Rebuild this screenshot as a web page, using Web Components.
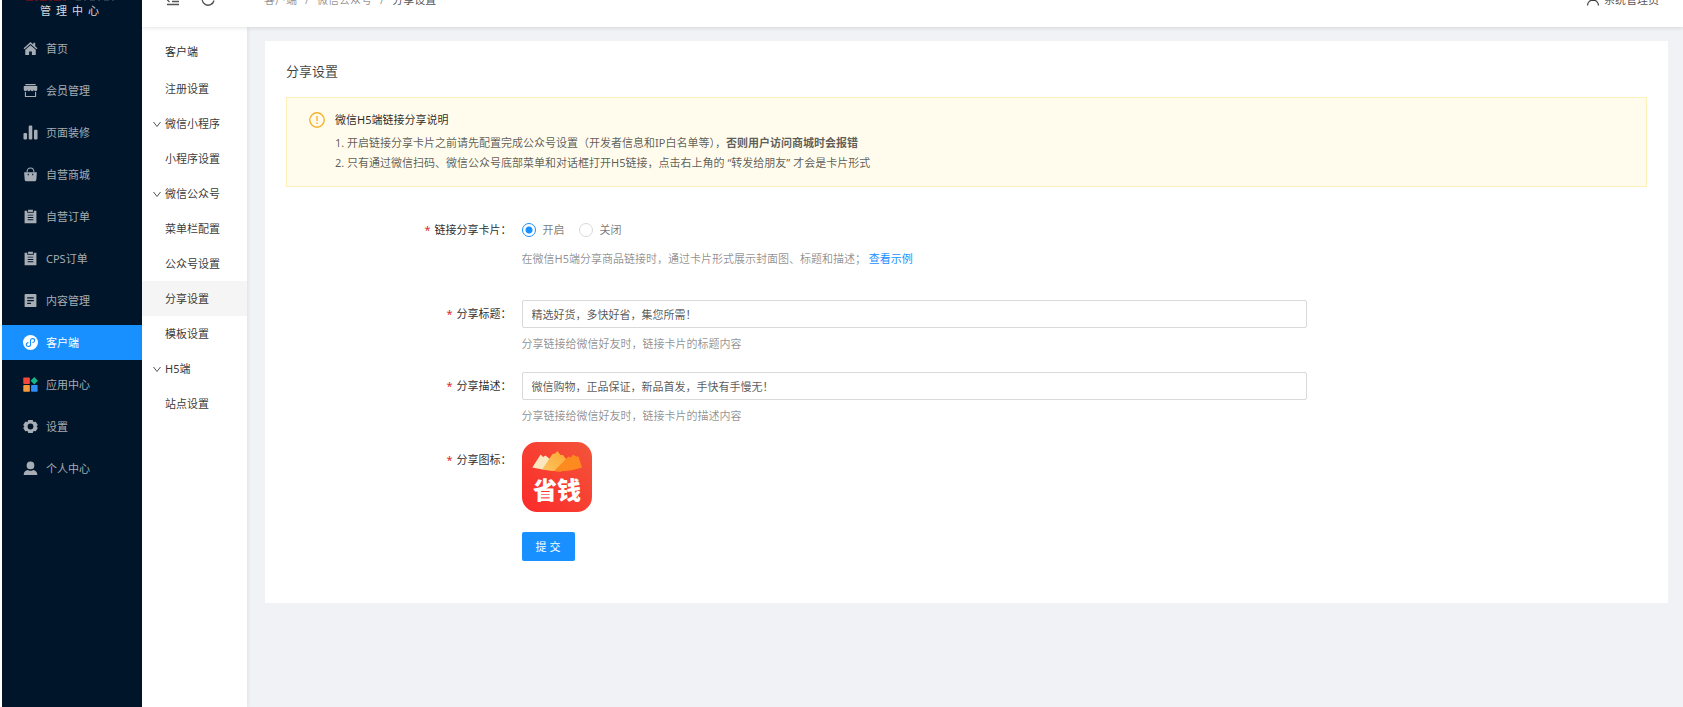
<!DOCTYPE html>
<html lang="zh-CN">
<head>
<meta charset="utf-8">
<title>分享设置</title>
<style>
html{height:100%}
body{margin:0;height:100%;font:11px/20px "Noto Sans","Noto Sans CJK SC",sans-serif;color:rgba(0,0,0,.85);background:#f0f2f5;overflow:hidden}
</style>
</head>
<body>
<admin-app></admin-app>
<script>
const define = (name, html, setup) => {
  const tpl = document.createElement('template');
  tpl.innerHTML = html;
  customElements.define(name, class extends HTMLElement {
    constructor() {
      super();
      this.attachShadow({ mode: 'open' }).append(tpl.content.cloneNode(true));
    }
    connectedCallback() { if (setup) setup(this.shadowRoot, this); }
  });
};

/* Icons of the main menu, on a 16 x 16 grid */
const icons = {
  home: '<path d="M8 1 .6 7.800l1 1.100L8 3.200l6.400 5.700 1-1.100-2.400-2.200V1.800h-2v2z"/><path d="M8 4.600 2.400 9.400v5.600h4.100v-3.800h3V15h4.100V9.400z"/>',
  shop: '<path d="M2.500 1h11v1.400h-11zM.8 3.200h14.400V7a1.800 1.800 0 0 1-3.600 0A1.800 1.800 0 0 1 8 7a1.800 1.800 0 0 1-3.600 0A1.800 1.800 0 0 1 .8 7z"/><path d="M2 9.600h1.200v4.200h9.600V9.600H14V15H2z"/>',
  bars: '<rect x=".5" y="8.500" width="3.800" height="7" rx="1.200"/><rect x="6.100" y=".5" width="3.800" height="15" rx="1.200"/><rect x="11.700" y="5" width="3.800" height="10.500" rx="1.200"/>',
  bag: '<path d="M4.300 5.500C4.300 2.500 5.800 1 8 1s3.700 1.500 3.700 4.500" fill="none" stroke="currentColor" stroke-width="1.100"/><path fill-rule="evenodd" d="M1.200 5.500h13.600l-.6 8a2 2 0 0 1-2 1.800H3.800a2 2 0 0 1-2-1.800zM5 7.300v1.500h1.200V7.300zm4.800 0v1.500H11V7.300z"/>',
  clip: '<path fill-rule="evenodd" d="M1.700 1.800h2.800V4h7V1.800h2.800v13.400H1.700zM5 6v1h6V6zm0 2.500v1h6v-1zM5 11v1h6v-1z"/><path d="M5.400.8h5.200v2.300H5.400z"/>',
  doc: '<path fill-rule="evenodd" d="M2.700 1h10.600a1 1 0 0 1 1 1v12a1 1 0 0 1-1 1H2.700a1 1 0 0 1-1-1V2a1 1 0 0 1 1-1zm1.800 3.500v1.400h7V4.500zm0 2.900v1.400h7V7.400zm0 2.900v1.400h4v-1.400z"/>',
  mini: '<circle cx="8" cy="8" r="8"/><path d="M5.400 8.100c-1.200.3-1.900 1.200-1.900 2.100 0 1.200 1 2 2.200 2 1.400 0 2.300-.9 2.300-2.200V6c0-1.300.9-2.200 2.300-2.200 1.200 0 2.200.8 2.200 2 0 .9-.7 1.800-1.900 2.100" fill="none" stroke="#1890ff" stroke-width="1.200" stroke-linecap="round"/>',
  apps: '<rect x=".3" y=".4" width="7" height="7" rx=".8" fill="#f5483b"/><path d="M12 .1 15.900 4 12 7.900 8.100 4z" fill="#12b886"/><rect x=".3" y="8.600" width="7" height="7" rx=".8" fill="#fa9a3c"/><rect x="8.600" y="8.600" width="7" height="7" rx=".8" fill="#2f8ff5"/>',
  gear: '<path fill-rule="evenodd" d="M5.700 1h4.600l.9 2.100 2.400-.2 2.200 3.600L14.500 8l1.300 1.500-2.200 3.600-2.400-.2-.9 2.100H5.700l-.9-2.100-2.400.2L.2 9.500 1.500 8 .2 6.500l2.200-3.600 2.400.2zM8 4.900a3.100 3.100 0 1 0 0 6.200 3.100 3.100 0 0 0 0-6.200z"/>',
  user: '<circle cx="8" cy="4.700" r="4.100"/><path d="M.7 15c0-3.400 1.900-4.900 4.500-5.400a5.200 5.200 0 0 0 5.600 0c2.600.5 4.500 2 4.500 5.400z"/>'
};

define('menu-entry', `
<style>
:host{display:block}
a{display:flex;align-items:center;height:35px;padding-left:21px;gap:8px;color:#a6adb4;text-decoration:none}
svg{width:15px;height:15px;fill:currentColor;flex:none}
:host([active]) a{background:#1890ff;color:#fff}
</style>
<a href="#"><svg viewBox="0 0 16 16" aria-hidden="true"></svg><span><slot></slot></span></a>`,
(root, host) => {
  root.querySelector('svg').innerHTML = icons[host.getAttribute('icon')];
  if (host.hasAttribute('active')) root.querySelector('a').setAttribute('aria-current', 'page');
});

define('main-menu', `
<style>
:host{display:block;background:#001529;width:140px;flex:none}
.brand{height:31px;box-sizing:border-box;text-align:center;color:#d5dae0;letter-spacing:5px}
.brand svg{display:block;width:96px;height:1px;margin:0 auto}
.brand b{display:block;line-height:20px;font-weight:400}
nav{display:flex;flex-direction:column;gap:7px}
</style>
<div class="brand"><svg viewBox="0 0 96 1" aria-hidden="true"><path d="M2 .5h42" stroke="#5e1020" stroke-dasharray="7 2 3 2"/><path d="M52 .5h42" stroke="#2b3a49" stroke-dasharray="5 3 2 4"/></svg><b>管理中心</b></div>
<nav aria-label="主菜单">
<menu-entry icon="home">首页</menu-entry>
<menu-entry icon="shop">会员管理</menu-entry>
<menu-entry icon="bars">页面装修</menu-entry>
<menu-entry icon="bag">自营商城</menu-entry>
<menu-entry icon="clip">自营订单</menu-entry>
<menu-entry icon="clip">CPS订单</menu-entry>
<menu-entry icon="doc">内容管理</menu-entry>
<menu-entry icon="mini" active>客户端</menu-entry>
<menu-entry icon="apps">应用中心</menu-entry>
<menu-entry icon="gear">设置</menu-entry>
<menu-entry icon="user">个人中心</menu-entry>
</nav>`);

define('sub-entry', `
<style>
:host{display:block}
a{display:flex;align-items:center;height:35px;padding-left:10px;gap:3px;color:rgba(0,0,0,.8);text-decoration:none}
svg{width:10px;height:10px;flex:none;fill:none;stroke:#555;visibility:hidden}
:host([group]) svg{visibility:visible}
:host([active]) a{background:#f5f5f5}
</style>
<a href="#"><svg viewBox="0 0 10 10" aria-hidden="true"><path d="m1.500 3 3.500 4.500L8.500 3"/></svg><span><slot></slot></span></a>`);

define('sub-menu', `
<style>
:host{display:block;width:105px;flex:none;background:#fff;box-shadow:1px 0 4px rgba(0,21,41,.08)}
h2{margin:0;padding:15px 0 9px 23px;font-size:11px;line-height:20px;font-weight:400}
</style>
<h2>客户端</h2>
<nav aria-label="客户端">
<sub-entry>注册设置</sub-entry>
<sub-entry group>微信小程序</sub-entry>
<sub-entry>小程序设置</sub-entry>
<sub-entry group>微信公众号</sub-entry>
<sub-entry>菜单栏配置</sub-entry>
<sub-entry>公众号设置</sub-entry>
<sub-entry active>分享设置</sub-entry>
<sub-entry>模板设置</sub-entry>
<sub-entry group>H5端</sub-entry>
<sub-entry>站点设置</sub-entry>
</nav>`);

define('top-bar', `
<style>
:host{display:flex;align-items:center;height:54px;margin-top:-27px;padding:0 24px;background:#fff;box-shadow:0 1px 4px rgba(0,21,41,.12);z-index:1}
button{border:0;background:none;padding:0;width:14px;height:14px;margin-right:21px;color:#555}
svg{display:block;width:14px;height:14px;fill:none;stroke:currentColor;stroke-width:1.300}
ol{display:flex;gap:8px;list-style:none;margin:0 auto 0 28px;padding:0;color:rgba(0,0,0,.45)}
li:last-child{color:rgba(0,0,0,.7)}
li+li::before{content:"/";margin-right:8px;color:rgba(0,0,0,.45)}
a{color:inherit;text-decoration:none}
.user{display:flex;align-items:center;gap:4px;color:rgba(0,0,0,.7)}
</style>
<button type="button" aria-label="收起菜单"><svg viewBox="0 0 14 14"><path d="M1 1.500h12M6 5h7M6 8.500h7M1 11.500h12M3.500 4 1 6.500 3.500 9"/></svg></button>
<button type="button" aria-label="刷新"><svg viewBox="0 0 14 14"><path d="M12.500 3.500A6 6 0 1 0 13 7.500M12.600 1v3H9.500"/></svg></button>
<ol aria-label="路径"><li><a href="#">客户端</a></li><li><a href="#">微信公众号</a></li><li>分享设置</li></ol>
<a class="user" href="#"><svg viewBox="0 0 14 14" aria-hidden="true"><circle cx="7" cy="4" r="3"/><path d="M1.500 12.500a5.500 5.500 0 0 1 11 0"/></svg>系统管理员</a>`);

define('info-alert', `
<style>
:host{display:flex;gap:10px;padding:12px 22px 13px;border:1px solid #fdf0b8;background:#fffced}
svg{width:16px;height:16px;margin-top:2px;flex:none;fill:none;stroke:#f5b32d;stroke-width:1.400}
h3{margin:0 0 3px;font-size:11px;line-height:20px;font-weight:400}
div{color:rgba(0,0,0,.65)}
h3{color:rgba(0,0,0,.85)}
</style>
<svg viewBox="0 0 16 16" aria-hidden="true"><circle cx="8" cy="8" r="7.200"/><path d="M8 4v5M8 10.500V12"/></svg>
<div><h3>微信H5端链接分享说明</h3><slot></slot></div>`);

/* Row of the form: label column, control column and free space */
const row = `
:host{display:grid;grid-template-columns:9fr 30fr 13fr}
.label{text-align:right;padding-right:10px;line-height:28px}
.label::before{content:"*";color:#e02b2b;margin-right:4px}
.hint{margin:0;line-height:20px;color:rgba(0,0,0,.45)}`;

define('text-field', `
<style>${row}
input{box-sizing:border-box;display:block;width:100%;height:28px;border:1px solid #d9d9d9;border-radius:2px;padding:0 9px;font:inherit;color:rgba(0,0,0,.68);background:#fff}
.hint{margin-top:6px}
</style>
<label class="label" for="f"></label>
<div><input id="f" type="text"><p class="hint"><slot></slot></p></div>`,
(root, host) => {
  root.querySelector('label').textContent = host.getAttribute('label') + '：';
  root.querySelector('input').value = host.getAttribute('value');
});

define('switch-field', `
<style>${row}
.options{display:flex;gap:14px;height:28px;align-items:center;color:rgba(0,0,0,.55)}
.options label{display:flex;align-items:center;gap:7px}
input{appearance:none;box-sizing:border-box;width:14px;height:14px;margin:0;border:1px solid #d9d9d9;border-radius:50%;background:#fff}
input:checked{border-color:#1890ff;background:radial-gradient(circle,#1890ff 3px,#fff 4px)}
.hint{margin-top:5px}
a{color:#1890ff;text-decoration:none}
</style>
<span class="label" id="g">链接分享卡片：</span>
<div><div class="options" role="radiogroup" aria-labelledby="g"><label><input type="radio" name="card" checked>开启</label><label><input type="radio" name="card">关闭</label></div>
<p class="hint">在微信H5端分享商品链接时，通过卡片形式展示封面图、标题和描述； <a href="#">查看示例</a></p></div>`);

define('app-logo', `
<style>:host{display:block;width:70px;height:70px}svg{display:block}text{font:900 24px "Noto Sans CJK SC",sans-serif}</style>
<svg width="70" height="70" viewBox="0 0 70 70" role="img" aria-label="省钱">
<defs><linearGradient id="r" x1="0" y1="1" x2="1" y2="0"><stop offset="0" stop-color="#fb2a2a"/><stop offset="1" stop-color="#f3553a"/></linearGradient>
<linearGradient id="y" x1="1" y1="0" x2="0" y2="1"><stop offset="0" stop-color="#fba52d"/><stop offset="1" stop-color="#fdc562"/></linearGradient></defs>
<rect width="70" height="70" rx="15" fill="url(#r)"/>
<path d="M10.300 25.500 18.700 12.500l2.300 2.500 2.500-1.500 5.500 4.500-8 9.500q-6-.8-10.700-2z" fill="#fbe8c0"/>
<path d="M20 27.500 30.500 12l2.500-.5 2.500-2.500 3 4 2.500 0 6 8-8 8.500q-11-.3-19-2z" fill="url(#y)"/>
<path d="M32 29 46.500 14.500l2.300 1 2.200-3 3 2 2.500 0 3.500 11Q48 30 32 29z" fill="#fd8a1e"/>
<text x="35" y="57" text-anchor="middle" fill="#fff">省钱</text></svg>`);

define('logo-field', `<style>${row}.label{padding-top:4px}</style>
<span class="label">分享图标：</span><slot></slot>`);

define('submit-row', `
<style>${row}
button{grid-column:2;justify-self:start;width:53px;height:29px;padding:0;border:0;border-radius:2px;background:#1890ff;color:#fff;font:inherit}
</style><button type="submit">提 交</button>`);

define('share-page', `
<style>
:host{display:block;background:#fff;padding:20px 21px 42px}
h1{margin:0 0 16px;font-size:13px;line-height:20px;font-weight:400;color:rgba(0,0,0,.75)}
p{margin:0;line-height:20px}
form{margin-top:29px}
switch-field{margin-bottom:31px}
text-field{margin-bottom:16px}
text-field+text-field{margin-top:18px}
logo-field{margin-bottom:20px}
</style>
<h1>分享设置</h1>
<info-alert>
<p>1. 开启链接分享卡片之前请先配置完成公众号设置（开发者信息和IP白名单等），<strong>否则用户访问商城时会报错</strong></p>
<p>2. 只有通过微信扫码、微信公众号底部菜单和对话框打开H5链接，点击右上角的 “转发给朋友” 才会是卡片形式</p>
</info-alert>
<form>
<switch-field></switch-field>
<text-field label="分享标题" value="精选好货，多快好省，集您所需！">分享链接给微信好友时，链接卡片的标题内容</text-field>
<text-field label="分享描述" value="微信购物，正品保证，新品首发，手快有手慢无！">分享链接给微信好友时，链接卡片的描述内容</text-field>
<logo-field><app-logo></app-logo></logo-field>
<submit-row></submit-row>
</form>`);

define('admin-app', `
<style>
:host{display:flex;min-height:100vh;border-left:2px solid #fff;overflow:hidden}
.page{flex:1;min-width:0;display:flex;flex-direction:column}
.body{flex:1;display:flex}
main{flex:1;min-width:0;padding:14px 15px 18px 18px}
</style>
<main-menu></main-menu>
<div class="page"><top-bar></top-bar><div class="body"><sub-menu></sub-menu><main><share-page></share-page></main></div></div>`);
</script>
</body>
</html>
